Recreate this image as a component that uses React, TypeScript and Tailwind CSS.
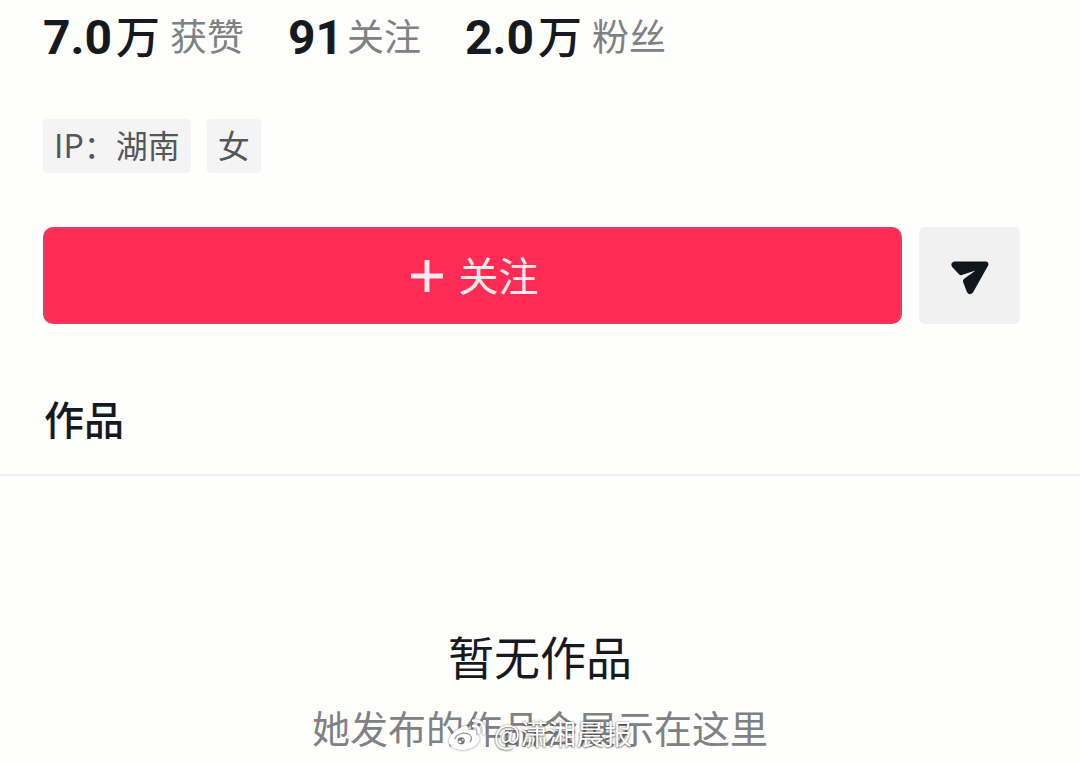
type StatProps = { value: string; unit?: string; label: string };

function Stat({ value, unit, label }: StatProps) {
  return (
    <div className="flex items-start">
      <span className="font-['Roboto'] text-5xl leading-[60px] font-bold">{value}</span>
      {unit && <span className="mr-1.5 ml-1 text-[44px] leading-[54px] font-medium">{unit}</span>}
      <span className="ml-1 text-[37px] leading-[54px] font-normal text-[#808184]">{label}</span>
    </div>
  );
}

function Tag({ children }: { children: string }) {
  return (
    <li className="rounded bg-[#f4f4f5] px-[11px] pb-1 text-[32px] leading-[50px] font-normal text-[#55565a]">
      {children}
    </li>
  );
}

function PlusIcon() {
  return (
    <svg className="mt-1 size-8" viewBox="0 0 32 32" fill="none" stroke="currentColor" strokeWidth="5" aria-hidden="true">
      <path d="M16 0v32M0 16h32" />
    </svg>
  );
}

function SendIcon() {
  return (
    <svg className="mt-1 h-[34px] w-[38px]" viewBox="0 0 38 34" fill="#11161c" aria-hidden="true">
      <path d="M3.5 0.5H34.5Q38.6 0.9 37 4.8L22 31.5Q18.7 35.2 16 31.2L12.1 21Q11.6 19 13.2 17.8L24.6 9.4L10.8 14Q9.2 14.5 8 13.2L1.2 6Q-1.3 1.8 3.5 0.5Z" />
    </svg>
  );
}

function WeiboIcon() {
  return (
    <svg className="h-[34px] w-[38px] drop-shadow-[0_0_1px_rgba(0,0,0,0.5)]" viewBox="0 0 36 32" fill="none" aria-hidden="true">
      <path
        d="M13 8.5C17 5.8 20.5 7.2 19 11.7C24.5 9.6 28 11 26.3 15.2C30.5 16.6 31 20.5 28.2 24C24 29.2 14.8 31.7 8 29.3C1.5 27.2-.7 22.7 2.2 17.7C4.3 14 9 10.5 13 8.5Z"
        fill="#fff"
      />
      <path d="M6.5 19.5C8 15.5 14 13.2 18.5 14.6C22.5 16 23.3 19.5 21 22.5" stroke="#9a9a9a" strokeWidth="1.2" strokeLinecap="round" />
      <circle cx="12.5" cy="21.5" r="3.4" fill="#777" />
      <circle cx="11.3" cy="22.5" r="1.4" fill="#fff" />
      <circle cx="14" cy="20.6" r="0.8" fill="#fff" />
      <path d="M24 7.5Q30 7 29.2 13.5M24 2.5Q35.5 2 34 14.5" stroke="#fff" strokeWidth="2.8" strokeLinecap="round" />
    </svg>
  );
}

export default function App() {
  return (
    <main className="min-h-screen overflow-hidden bg-[#fefefd] font-['Noto_Sans_CJK_SC',sans-serif] text-[#161a20]">
      <header className="pr-[60px] pl-[43px]">
        <div className="flex gap-11 pt-2">
          <Stat value="7.0" unit="万" label="获赞" />
          <Stat value="91" label="关注" />
          <Stat value="2.0" unit="万" label="粉丝" />
        </div>
        <ul className="mt-[51px] flex gap-4">
          <Tag>IP：湖南</Tag>
          <Tag>女</Tag>
        </ul>
        <div className="mt-[54px] flex gap-[17px]">
          <button
            type="button"
            className="flex h-[97px] flex-1 items-center justify-center gap-4 rounded-[10px] border-2 border-[#e53d60] bg-[#fe2c55] pb-1 pl-1 text-[40px] text-[#ffe9ec]"
          >
            <PlusIcon />
            关注
          </button>
          <button
            type="button"
            aria-label="私信"
            className="flex h-[97px] w-[101px] items-center justify-center rounded-md bg-[#f1f1f2]"
          >
            <SendIcon />
          </button>
        </div>
      </header>
      <nav className="mt-[66px] border-b-2 border-[#f0f0f1] pr-[60px] pb-7 pl-11">
        <a href="#works" className="block w-fit text-[40px] leading-[56px] font-medium">
          作品
        </a>
      </nav>
      <section id="works" className="flex flex-col items-center pt-[147px]">
        <h2 className="text-[46px] leading-[64px] font-normal">暂无作品</h2>
        <div className="relative mt-3">
          <p className="text-[38px] leading-[56px] font-normal text-[#808184]">她发布的作品会展示在这里</p>
          <div className="absolute inset-0 flex items-center justify-center gap-2 pt-4">
            <WeiboIcon />
            <span className="pb-1 text-[28px] leading-8 text-white [text-shadow:0_0_2px_rgba(0,0,0,0.5),0_1px_2px_rgba(0,0,0,0.4)]">
              @潇湘晨报
            </span>
          </div>
        </div>
      </section>
    </main>
  );
}
